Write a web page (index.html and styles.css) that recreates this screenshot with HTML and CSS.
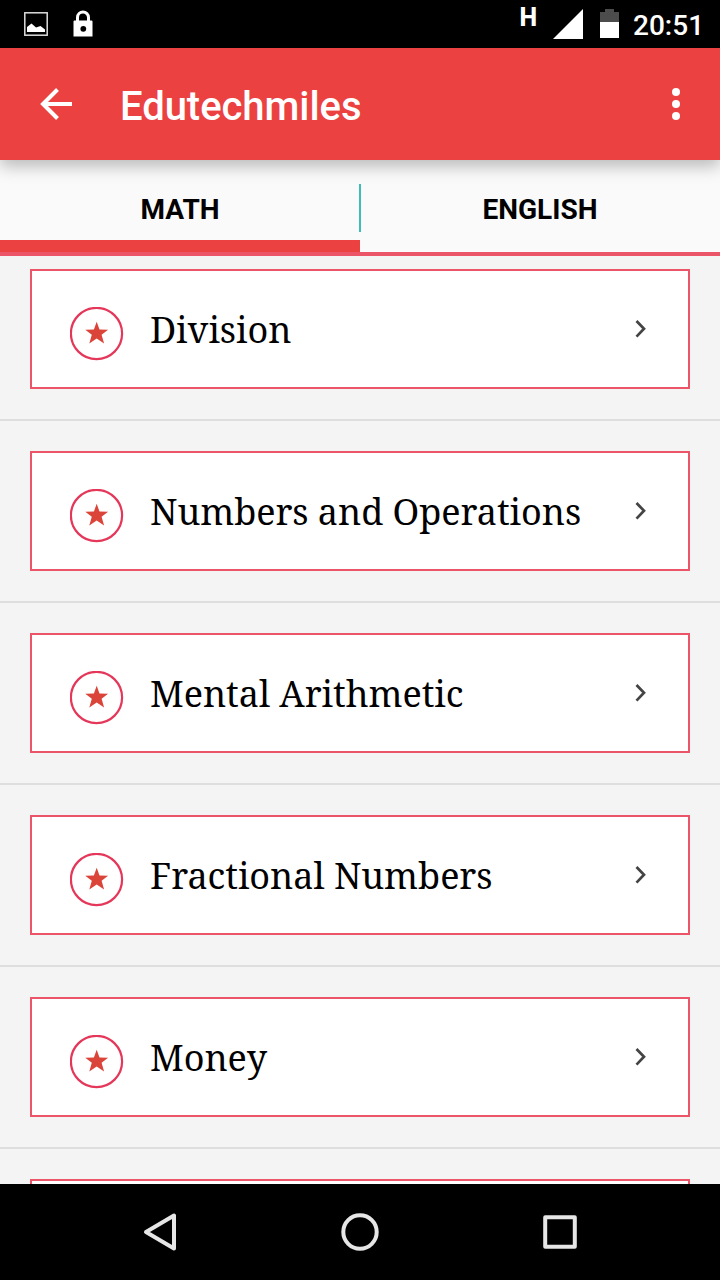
FILE: index.html
```
<!DOCTYPE html>
<html lang="en">
<head>
    <meta charset="UTF-8">
    <meta name="viewport" content="width=device-width, initial-scale=1.0">
    <title>Edutechmiles</title>
    <link rel="stylesheet" href="styles.css">
</head>
<body>
    <!-- Shared icons -->
    <svg class="sprite" aria-hidden="true">
        <symbol id="star" viewBox="0 0 54 54">
            <circle cx="26.5" cy="26.5" r="25.6" fill="#fff" stroke="#e4375a" stroke-width="2.2"/>
            <path d="M26.7 14.8l2.8 7.8 8.6.1-6.5 5.1 2.5 8.8-7.4-5-7.4 5 2.5-8.8-6.5-5.1 8.6-.1z" fill="#db4438"/>
        </symbol>
        <symbol id="chevron" viewBox="0 0 14 20">
            <path d="M2.500 2l7.500 7.800-7.500 7.800" fill="none" stroke="#444" stroke-width="2.700"/>
        </symbol>
    </svg>

    <div class="status-bar">
        <svg class="picture-icon" viewBox="0 0 24 24">
            <rect x=".8" y=".8" width="22.400" height="22.400" fill="none" stroke="#ddd" stroke-width="1.500"/>
            <path d="M3 20v-5l4.500-3.500 4.500 4 4.500-1.500 4.500 3.500V20z" fill="#fff"/>
        </svg>
        <svg class="lock-icon" viewBox="0 0 20 27">
            <path d="M4.500 12V7.500a5.500 5.500 0 0 1 11 0V12" fill="none" stroke="#fff" stroke-width="3"/>
            <path d="M1.500 10.500h17a1 1 0 0 1 1 1v15H.500v-15a1 1 0 0 1 1-1z" fill="#fff"/>
            <circle cx="10.300" cy="18.800" r="2.900" fill="#000"/>
        </svg>
        <span class="network">H</span>
        <svg class="signal-icon" viewBox="0 0 30 30">
            <path d="M30 0v30H0z" fill="#fff"/>
        </svg>
        <svg class="battery-icon" viewBox="0 0 19 29">
            <path d="M5 0h9v3h5v10H0V3h5z" fill="#4c4c4c"/>
            <path d="M0 13h19v16H0z" fill="#fff"/>
        </svg>
        <span class="clock">20:51</span>
    </div>

    <header class="app-bar">
        <svg class="back-icon" viewBox="0 0 32 32">
            <path d="M32 16H3M17.500 1.500L3 16l14.500 14.500" fill="none" stroke="#fff" stroke-width="4"/>
        </svg>
        <h1 class="title">Edutechmiles</h1>
        <svg class="more-icon" viewBox="0 0 8 32">
            <g fill="#fff">
                <circle cx="4" cy="4" r="4"/>
                <circle cx="4" cy="16" r="4"/>
                <circle cx="4" cy="28" r="4"/>
            </g>
        </svg>
    </header>

    <nav class="tabs">
        <div class="tab active">MATH</div>
        <div class="divider"></div>
        <div class="tab">ENGLISH</div>
    </nav>

    <main class="content">
        <ul class="topics">
            <li>
                <div class="card">
                    <svg class="star"><use href="#star"/></svg>
                    <span class="name">Division</span>
                    <svg class="chevron"><use href="#chevron"/></svg>
                </div>
            </li>
            <li>
                <div class="card">
                    <svg class="star"><use href="#star"/></svg>
                    <span class="name">Numbers and Operations</span>
                    <svg class="chevron"><use href="#chevron"/></svg>
                </div>
            </li>
            <li>
                <div class="card">
                    <svg class="star"><use href="#star"/></svg>
                    <span class="name">Mental Arithmetic</span>
                    <svg class="chevron"><use href="#chevron"/></svg>
                </div>
            </li>
            <li>
                <div class="card">
                    <svg class="star"><use href="#star"/></svg>
                    <span class="name">Fractional Numbers</span>
                    <svg class="chevron"><use href="#chevron"/></svg>
                </div>
            </li>
            <li>
                <div class="card">
                    <svg class="star"><use href="#star"/></svg>
                    <span class="name">Money</span>
                    <svg class="chevron"><use href="#chevron"/></svg>
                </div>
            </li>
            <li>
                <div class="card"></div>
            </li>
        </ul>
    </main>

    <footer class="nav-bar">
        <svg viewBox="0 0 40 40">
            <path d="M34 3.500v33L6 20z" fill="none" stroke="#e6e6e6" stroke-width="4" stroke-linejoin="round"/>
        </svg>
        <svg viewBox="0 0 40 40">
            <circle cx="20" cy="20" r="16.700" fill="none" stroke="#e6e6e6" stroke-width="4"/>
        </svg>
        <svg viewBox="0 0 40 40">
            <rect x="5.200" y="5.200" width="29.600" height="29.600" fill="none" stroke="#e6e6e6" stroke-width="4" stroke-linejoin="round"/>
        </svg>
    </footer>
</body>
</html>
```

FILE: styles.css
```
* {
    box-sizing: border-box;
}

body {
    margin: 0;
    width: 720px;
    height: 1280px;
    display: flex;
    flex-direction: column;
    overflow: hidden;
    background-color: #f4f4f4;
    font-family: Roboto, sans-serif;
}

svg {
    display: block;
    flex: none;
}

.sprite {
    display: none;
}

/* Status bar */
.status-bar {
    flex: none;
    height: 48px;
    padding: 0 17px 0 24px;
    display: flex;
    align-items: flex-start;
    background-color: #000;
    color: #fff;
}

.picture-icon {
    width: 24px;
    height: 24px;
    margin-top: 12px;
}

.lock-icon {
    width: 20px;
    height: 27px;
    margin: 10px 0 0 25px;
}

.network {
    margin: 6px 16px 0 auto;
    font-size: 25px;
    font-weight: 800;
    line-height: 24px;
}

.signal-icon {
    width: 30px;
    height: 30px;
    margin-top: 9px;
}

.battery-icon {
    width: 19px;
    height: 29px;
    margin: 9px 14px 0 17px;
}

.clock {
    width: 70px;
    font-size: 28px;
    font-weight: 500;
    line-height: 52px;
    white-space: nowrap;
}

/* App bar */
.app-bar {
    flex: none;
    position: relative;
    z-index: 1;
    height: 112px;
    padding: 0 40px;
    display: flex;
    align-items: center;
    background-color: #ec4141;
    color: #fff;
    box-shadow: 0 6px 16px rgba(0, 0, 0, 0.27);
}

.back-icon {
    width: 32px;
    height: 32px;
}

.title {
    flex: 1;
    margin: 6px 0 0 48px;
    font-size: 40px;
    font-weight: 500;
    line-height: 48px;
    letter-spacing: -0.05px;
}

.more-icon {
    width: 8px;
    height: 32px;
}

/* Tabs */
.tabs {
    flex: none;
    height: 96px;
    display: flex;
    background-color: #fafafa;
    border-bottom: 4px solid #ec5568;
}

.tab {
    flex: 1;
    padding-top: 34px;
    font-size: 28px;
    font-weight: 700;
    line-height: 32px;
    text-align: center;
    color: #000;
}

.tab.active {
    border-bottom: 12px solid #ec4141;
}

.divider {
    width: 2px;
    height: 48px;
    margin: 24px -1px 0;
    background-color: #3dbdb7;
}

/* Topic list */
.content {
    flex: 1;
    min-height: 0;
    overflow: hidden;
}

.topics {
    list-style: none;
    padding: 0;
    margin: -17px 0 0;
}

.topics li {
    padding: 30px;
    border-bottom: 2px solid #dedede;
}

.card {
    height: 120px;
    padding: 0 38px;
    display: flex;
    align-items: center;
    background-color: #fff;
    border: 2px solid #ec5568;
}

.star {
    width: 54px;
    height: 54px;
    margin-top: 10px;
}

.name {
    flex: 1;
    margin: 2px 0 0 26px;
    font-family: "Noto Serif", "DejaVu Serif Condensed", "DejaVu Serif", serif;
    font-size: 36px;
    font-stretch: condensed;
    line-height: 48px;
    letter-spacing: -0.05px;
    white-space: nowrap;
    color: #000;
}

.chevron {
    width: 14px;
    height: 20px;
    margin-right: 2px;
}

/* Navigation bar */
.nav-bar {
    flex: none;
    height: 96px;
    display: flex;
    align-items: center;
    justify-content: center;
    gap: 160px;
    background-color: #000;
}

.nav-bar svg {
    width: 40px;
    height: 40px;
}
```
